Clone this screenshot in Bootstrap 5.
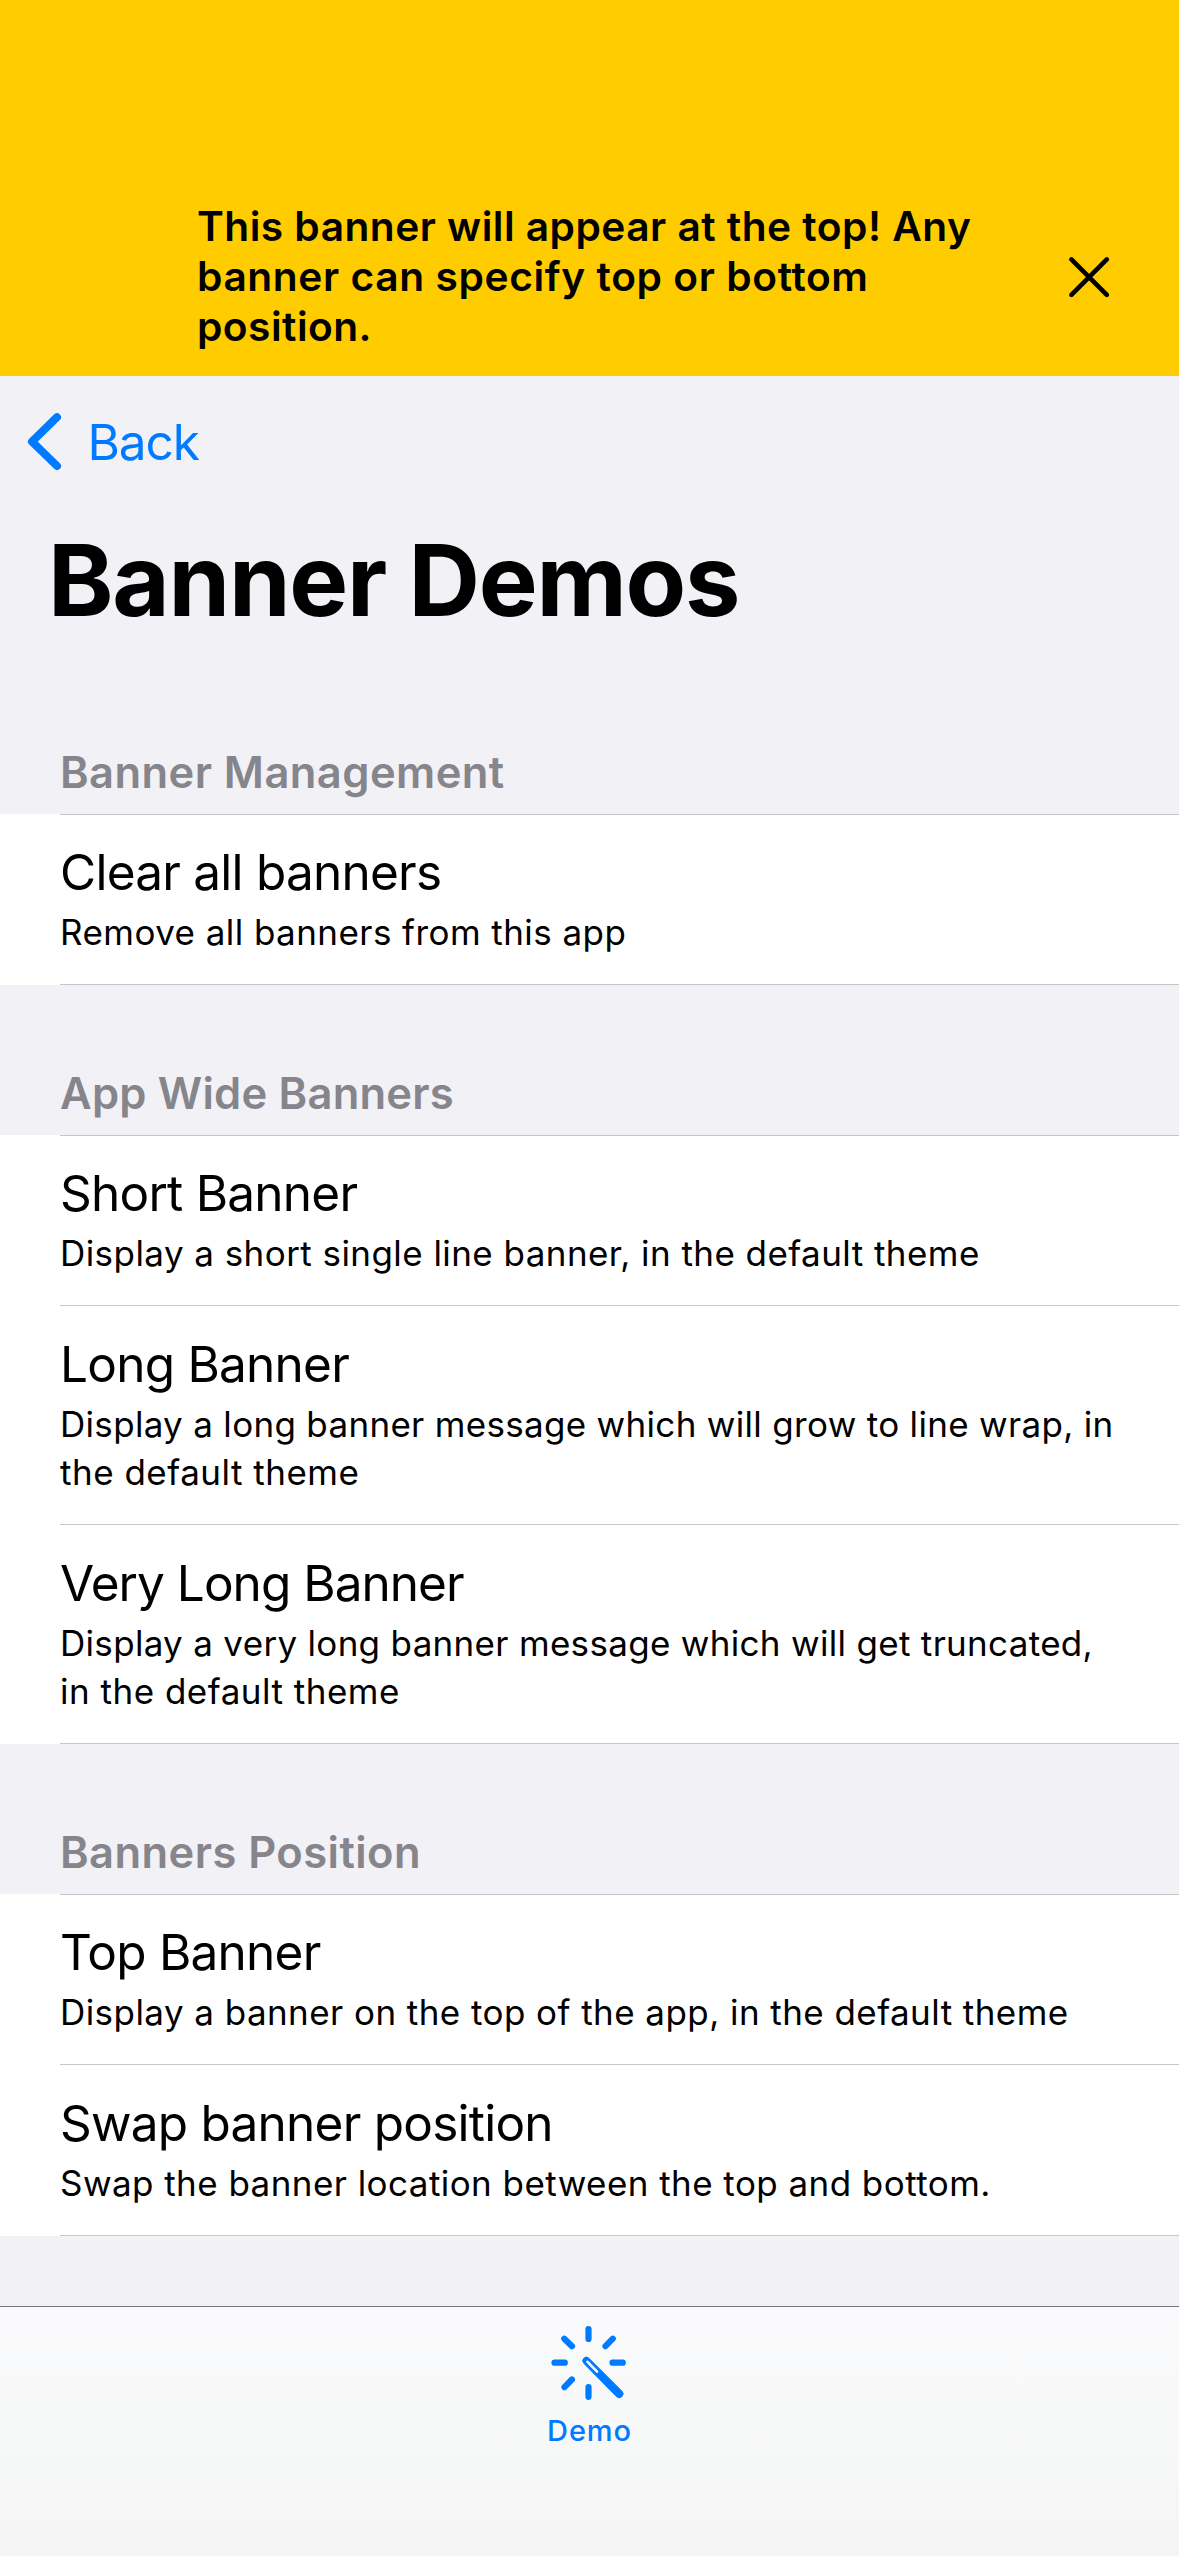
<!DOCTYPE html>
<html lang="en">
<head>
<meta charset="utf-8">
<meta name="viewport" content="width=device-width, initial-scale=1">
<title>Banner Demos</title>
<link href="https://cdn.jsdelivr.net/npm/bootstrap@5.3.0/dist/css/bootstrap.min.css" rel="stylesheet">
<style>
  body { font-family: Inter, "Liberation Sans", sans-serif; background: #f2f1f6; color: #000; }
  .app-screen { height: 2556px; overflow: hidden; }
  .app-banner { background: #ffcc00; height: 376px; padding: 202px 65px 24px 197px; font-size: 40.7px; line-height: 50px; font-weight: 600; letter-spacing: .47px; }
  .app-banner .line-two { letter-spacing: .6px; }
  .close-btn { width: 50px; height: 50px; margin-top: 50px; }
  .back-link { padding: 36px 0 0 24px; color: #007aff; font-size: 49.5px; line-height: 60px; letter-spacing: -1px; gap: 23.4px; }
  .back-link svg { width: 40px; height: 60px; }
  .page-title { font-size: 99px; line-height: 120px; letter-spacing: -1.22px; margin: 48px 0 0 48px; }
  .group-title { height: 150px; padding: 0 0 15px 60px; font-size: 43.5px; line-height: 54px; font-weight: 600; letter-spacing: .43px; color: #85858b; }
  .group-title.is-first { height: 174px; }
  .group-title.tight { letter-spacing: .23px; }
  .demo-item { padding: 0 0 0 60px; border: 0; background: #fff; color: #000; border-radius: 0 !important; }
  .item-body { height: 170px; padding-top: 27px; border-top: 1px solid #c6c6c8; }
  .item-body.two-line { height: 219px; }
  .demo-item:first-child .item-body { padding-top: 26px; }
  .demo-item:last-child .item-body { border-bottom: 1px solid #c6c6c8; box-sizing: content-box; height: 142px; }
  .demo-item:last-child .item-body.two-line { height: 191px; }
  .demo-item:only-child .item-body { height: 143px; }
  .demo-item:last-child .item-body.tall { height: 143px; }
  .item-name { font-size: 49.5px; line-height: 62px; letter-spacing: -.76px; }
  .item-note { font-size: 35px; line-height: 48px; letter-spacing: .44px; margin-top: 5px; white-space: nowrap; }
  .item-name.tight { letter-spacing: -.96px; }
  .item-note.tight { letter-spacing: .31px; }
  .item-note .second { letter-spacing: .5px; }
  .tab-area { height: 250px; border-top: 1px solid #77777b; background: linear-gradient(#fafafc 0, #f7f8f8 50%, #f5f5f5 100%); padding-top: 12px; color: #007aff; }
  .tab-area svg { width: 90px; height: 84px; }
  .tab-label { font-size: 29px; line-height: 36px; font-weight: 500; letter-spacing: .9px; margin-top: 10px; }
</style>
</head>
<body>
<div class="app-screen d-flex flex-column">
  <header class="app-banner d-flex justify-content-between align-items-start flex-shrink-0">
    <div class="text-nowrap">This banner will appear at the top! Any<br><span class="line-two">banner can specify top or bottom</span><br><span>position.</span></div>
    <svg class="close-btn" viewBox="1064 252 50 50" fill="none" stroke="#000" stroke-width="4.6" stroke-linecap="round" role="img" aria-label="Close"><path d="M1071.4 259.4L1106.8 294.8M1106.8 259.4L1071.4 294.8"/></svg>
  </header>

  <a class="back-link d-flex align-items-center text-decoration-none flex-shrink-0" href="#">
    <svg viewBox="24 412 40 60" fill="none" stroke="currentColor" stroke-width="8" stroke-linecap="round" stroke-linejoin="round"><path d="M57 417.2L32 441.6L57 466"/></svg>
    <span>Back</span>
  </a>
  <h1 class="page-title fw-bold flex-shrink-0">Banner Demos</h1>

  <main class="flex-grow-1">
    <div class="group-title is-first d-flex align-items-end">Banner Management</div>
    <div class="list-group list-group-flush">
      <div class="list-group-item demo-item"><div class="item-body"><div class="item-name">Clear all banners</div><div class="item-note">Remove all banners from this app</div></div></div>
    </div>

    <div class="group-title tight d-flex align-items-end">App Wide Banners</div>
    <div class="list-group list-group-flush">
      <div class="list-group-item demo-item"><div class="item-body"><div class="item-name">Short Banner</div><div class="item-note">Display a short single line banner, in the default theme</div></div></div>
      <div class="list-group-item demo-item"><div class="item-body two-line"><div class="item-name">Long Banner</div><div class="item-note tight">Display a long banner message which will grow to line wrap, in<br><span class="second">the default theme</span></div></div></div>
      <div class="list-group-item demo-item"><div class="item-body two-line"><div class="item-name tight">Very Long Banner</div><div class="item-note tight">Display a very long banner message which will get truncated,<br><span class="second">in the default theme</span></div></div></div>
    </div>

    <div class="group-title d-flex align-items-end">Banners Position</div>
    <div class="list-group list-group-flush">
      <div class="list-group-item demo-item"><div class="item-body"><div class="item-name">Top Banner</div><div class="item-note">Display a banner on the top of the app, in the default theme</div></div></div>
      <div class="list-group-item demo-item"><div class="item-body tall"><div class="item-name">Swap banner position</div><div class="item-note">Swap the banner location between the top and bottom.</div></div></div>
    </div>
  </main>

  <nav class="tab-area d-flex flex-column align-items-center flex-shrink-0">
    <svg viewBox="544.5 2319 90 84" fill="none" stroke="currentColor" stroke-linecap="round">
      <path stroke-width="6.2" d="M588 2329V2339M588 2387V2396.8M554 2362.7H564.3M612 2362.7H622.3M563.8 2338.7L571.5 2346.2M612.3 2338.7L605 2346.2M564 2387.2L571.4 2379.5"/>
      <path fill="currentColor" stroke-width="1" stroke-linejoin="round" d="M583.4 2363.4A3.4 3.4 0 0 1 588.4 2358.2L621.4 2391.2A3.7 3.7 0 0 1 616 2396.6Z"/>
      <path stroke="#fafafb" stroke-width="2.6" d="M587 2361.8L596.6 2371.6"/>
    </svg>
    <div class="tab-label">Demo</div>
  </nav>
</div>
<script src="https://cdn.jsdelivr.net/npm/bootstrap@5.3.0/dist/js/bootstrap.bundle.min.js"></script>
</body>
</html>
